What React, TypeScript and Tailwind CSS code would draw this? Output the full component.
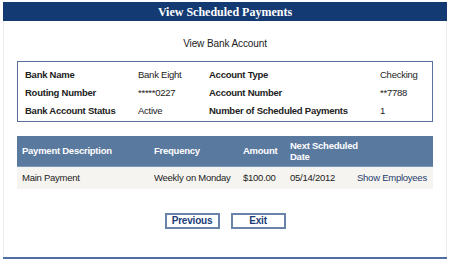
import React from "react";

const rows = [
  ["Bank Name", "Bank Eight", "Account Type", "Checking"],
  ["Routing Number", "*****0227", "Account Number", "**7788"],
  ["Bank Account Status", "Active", "Number of Scheduled Payments", "1"],
];

export default function App() {
  return (
    <div className="w-[450px] h-[262px] bg-white font-['Liberation_Sans',Arial,sans-serif] text-[9.5px] tracking-[-0.25px] text-[#222]">
      <div className="ml-[3px] w-[444px] pt-[2px]">
        <div className="h-[19px] bg-[#133a73] flex items-center justify-center">
          <span className="text-white font-bold text-[12px] tracking-normal font-['Liberation_Serif',serif] leading-none">
            View Scheduled Payments
          </span>
        </div>
        <div className="border-x border-[#ececec] h-[236px] flex flex-col">
          <div className="text-center mt-[17px] leading-[12px] text-[10px] tracking-[-0.1px]">View Bank Account</div>
          <div className="mx-[13px] mt-[11px] border border-[#58709b] pt-[4px] pb-[1px] pl-[7px]">
            {rows.map((r) => (
              <div key={r[0]} className="grid grid-cols-[113px_71px_171px_1fr] h-[18px] items-center">
                <span className="font-bold">{r[0]}</span>
                <span>{r[1]}</span>
                <span className="font-bold">{r[2]}</span>
                <span>{r[3]}</span>
              </div>
            ))}
          </div>
          <div className="mx-[13px] mt-[14px]">
            <div className="grid grid-cols-[132px_89px_47px_67px_1fr] h-[31px] bg-[#5a799f] text-white font-bold items-center border-b border-[#7d97b8] whitespace-nowrap">
              <span className="px-[5px]">Payment Description</span>
              <span className="px-[5px]">Frequency</span>
              <span className="px-[5px]">Amount</span>
              <span className="px-[5px] leading-[11px]">
                Next Scheduled
                <br />
                Date
              </span>
              <span />
            </div>
            <div className="grid grid-cols-[132px_89px_47px_67px_1fr] h-[22px] pt-[1px] bg-[#f6f4f0] items-center whitespace-nowrap">
              <span className="px-[5px]">Main Payment</span>
              <span className="px-[5px]">Weekly on Monday</span>
              <span className="px-[5px]">$100.00</span>
              <span className="px-[5px]">05/14/2012</span>
              <span className="px-[5px] text-[#1f3c6e]">Show Employees</span>
            </div>
          </div>
          <div className="flex justify-center gap-[11px] mt-[24px]">
            <button className="w-[55px] h-[16px] border-2 border-[#6a83aa] text-[#1c3c78] font-bold text-[10px] tracking-[-0.2px] leading-none bg-white">
              Previous
            </button>
            <button className="w-[55px] h-[16px] border-2 border-[#6a83aa] text-[#1c3c78] font-bold text-[10px] tracking-[-0.2px] leading-none bg-white">
              Exit
            </button>
          </div>
        </div>
        <div className="h-[2px] bg-[#4f6fa0]" />
      </div>
    </div>
  );
}
